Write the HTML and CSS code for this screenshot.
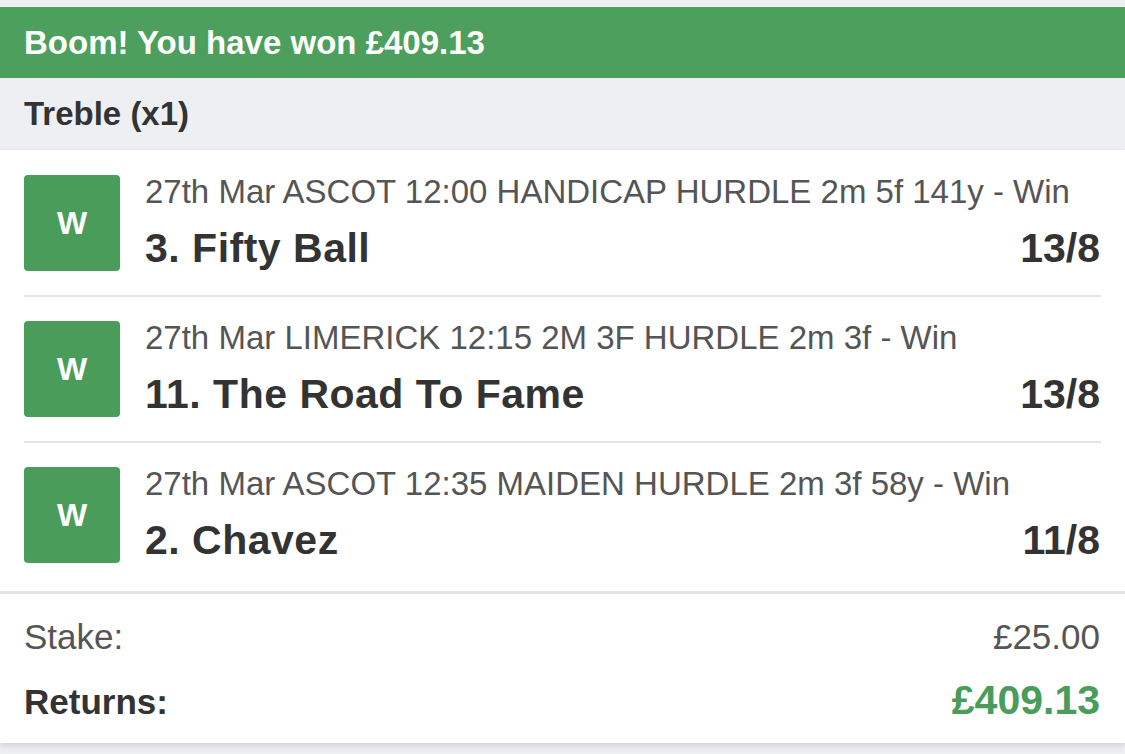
FILE: index.html
```html
<!DOCTYPE html>
<html>
<head>
<meta charset="utf-8">
<link rel="stylesheet" href="styles.css">
</head>
<body>
<div class="page">
  <div class="banner">Boom! You have won £409.13</div>
  <div class="bet-type">Treble (x1)</div>
  <div class="card">
    <ul class="legs">
      <li class="leg">
        <div class="badge">W</div>
        <div class="leg-info">
          <div class="meta">27th Mar ASCOT 12:00 HANDICAP HURDLE 2m 5f 141y - Win</div>
          <div class="runner-row"><span class="runner">3. Fifty Ball</span><span class="odds">13/8</span></div>
        </div>
      </li>
      <li class="leg">
        <div class="badge">W</div>
        <div class="leg-info">
          <div class="meta">27th Mar LIMERICK 12:15 2M 3F HURDLE 2m 3f - Win</div>
          <div class="runner-row"><span class="runner">11. The Road To Fame</span><span class="odds">13/8</span></div>
        </div>
      </li>
      <li class="leg">
        <div class="badge">W</div>
        <div class="leg-info">
          <div class="meta">27th Mar ASCOT 12:35 MAIDEN HURDLE 2m 3f 58y - Win</div>
          <div class="runner-row"><span class="runner">2. Chavez</span><span class="odds">11/8</span></div>
        </div>
      </li>
    </ul>
    <div class="totals">
      <div class="total-row stake"><span>Stake:</span><span>£25.00</span></div>
      <div class="total-row returns"><span>Returns:</span><span class="returns-value">£409.13</span></div>
    </div>
  </div>
</div>
</body>
</html>
```

FILE: styles.css
```css
* { box-sizing: border-box; }
html, body {
  margin: 0;
  padding: 0;
  background: #eeeff3;
  font-family: "Liberation Sans", Arial, sans-serif;
  color: #333;
}
.page {
  width: 1125px;
  height: 754px;
  overflow: hidden;
  padding-top: 7px;
  background: #eeeff3;
}
.banner {
  height: 71px;
  background: #4c9f5c;
  color: #fff;
  font-weight: bold;
  font-size: 33px;
  line-height: 71px;
  padding-left: 24px;
}
.bet-type {
  height: 72px;
  background: #eeeff3;
  font-weight: bold;
  font-size: 33px;
  line-height: 72px;
  padding-left: 24px;
  color: #333;
}
.card {
  background: #fff;
  box-shadow: 0 3px 6px rgba(0,0,0,0.12);
}
.legs {
  list-style: none;
  margin: 0;
  padding: 1px 24px 0;
}
.leg {
  display: flex;
  gap: 25px;
  padding: 24px 0;
  border-bottom: 2px solid #e3e4e7;
}
.leg:last-child {
  border-bottom: none;
  padding-bottom: 28px;
}
.badge {
  flex: 0 0 96px;
  width: 96px;
  height: 96px;
  border-radius: 4px;
  background: #4a9c5a;
  color: #fff;
  font-weight: bold;
  font-size: 32px;
  display: flex;
  align-items: center;
  justify-content: center;
}
.leg-info {
  flex: 1;
  display: flex;
  flex-direction: column;
}
.meta {
  font-size: 33px;
  line-height: 38px;
  color: #555;
  margin-top: -2px;
}
.runner-row {
  display: flex;
  justify-content: space-between;
  align-items: baseline;
  margin-top: 14px;
  padding-right: 1px;
}
.runner, .odds {
  font-size: 41px;
  font-weight: bold;
  line-height: 46px;
  color: #333;
}
.runner {
  letter-spacing: 0.5px;
}
.totals {
  border-top: 3px solid #e0e2e6;
  padding: 23px 25px 18px 24px;
}
.total-row {
  display: flex;
  justify-content: space-between;
  align-items: baseline;
}
.stake {
  font-size: 35px;
  line-height: 40px;
  color: #555;
}
.returns {
  margin-top: 20px;
  font-size: 35px;
  font-weight: bold;
  line-height: 46px;
  color: #333;
}
.returns-value {
  font-size: 41px;
  color: #4a9c5a;
}
```
